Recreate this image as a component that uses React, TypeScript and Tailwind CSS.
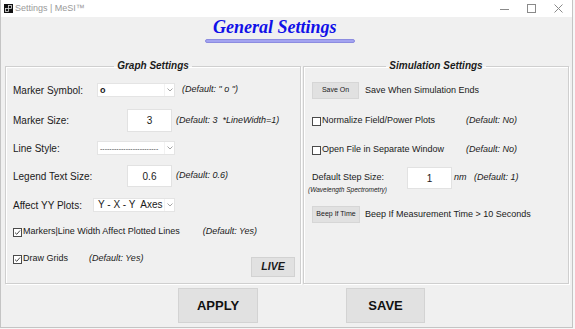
import React from "react";

function Chevron() {
  return (
    <svg width="6" height="4" viewBox="0 0 6 4" className="text-[#9a9a9a]">
      <path d="M0.5 0.5 L3 3 L5.5 0.5" fill="none" stroke="currentColor" strokeWidth="0.9" />
    </svg>
  );
}

function Select({ className, children }: { className: string; children: React.ReactNode }) {
  return (
    <div className={`flex items-center h-[14px] bg-white border border-[#e4e4e4] ${className}`}>
      <div className="flex-1 pl-[2px] flex items-center overflow-hidden whitespace-nowrap">{children}</div>
      <div className="w-[10px] h-full flex items-center justify-center border-l border-[#f2f2f2]">
        <Chevron />
      </div>
    </div>
  );
}

function Field({ value, className }: { value: string; className: string }) {
  return (
    <div className={`bg-white border border-[#e2e2e2] flex items-center justify-center text-[10px] ${className}`}>
      {value}
    </div>
  );
}

function Check({ checked }: { checked?: boolean }) {
  return (
    <span className="w-[9px] h-[9px] border border-[#4a4a4a] bg-white flex items-center justify-center shrink-0">
      {checked && (
        <svg width="7" height="7" viewBox="0 0 7 7">
          <path d="M1 3.6 L2.8 5.3 L6 1.5" fill="none" stroke="#333" strokeWidth="0.9" />
        </svg>
      )}
    </span>
  );
}

function SmallButton({ label, className }: { label: string; className: string }) {
  return (
    <div className={`h-[17px] bg-[#e1e1e1] border border-[#d6d6d6] flex items-center justify-center text-[7px] ${className}`}>
      {label}
    </div>
  );
}

export default function App() {
  return (
    <div className="w-[575px] h-[329px] bg-[#f7f7f7] overflow-hidden font-['Liberation_Sans',Arial,sans-serif] text-[#1a1a1a]">
      <div className="w-[573px] h-[328px] bg-[#f0f0f0] border-x border-b border-[#c4c4c4] flex flex-col">
        {/* Title bar */}
        <div className="h-[17px] bg-white flex items-center pl-[3px] pr-[9px]">
          <svg width="9" height="9" viewBox="0 0 9 9">
            <rect width="9" height="9" fill="#111" />
            <rect x="4.5" y="1.5" width="3" height="3" fill="none" stroke="#ddd" strokeWidth="0.8" />
            <rect x="1.5" y="4.5" width="3" height="3" fill="none" stroke="#ddd" strokeWidth="0.8" />
          </svg>
          <span className="ml-[2px] text-[9px] text-[#9a9a9a]">Settings | MeSI™</span>
          <div className="ml-auto flex items-center gap-[18px] text-[#8a8a8a]">
            <svg width="9" height="9" viewBox="0 0 9 9">
              <path d="M0 5.5 H9" stroke="currentColor" strokeWidth="1" />
            </svg>
            <svg width="9" height="9" viewBox="0 0 9 9">
              <rect x="0.5" y="0.5" width="8" height="8" fill="none" stroke="currentColor" strokeWidth="1" />
            </svg>
            <svg width="9" height="9" viewBox="0 0 9 9">
              <path d="M0.5 0.5 L8.5 8.5 M8.5 0.5 L0.5 8.5" stroke="currentColor" strokeWidth="1" />
            </svg>
          </div>
        </div>

        {/* Heading */}
        <div className="flex flex-col items-start pl-[204px]">
          <h1 className="ml-[8px] font-['Liberation_Serif','Times_New_Roman',serif] font-bold italic text-[18px] leading-[20px] text-[#1010e8]">
            General Settings
          </h1>
          <div className="mt-[2px] w-[150px] h-[4px] rounded-[2px] bg-[#a3a3f0] border border-[#8c8ce0]" />
        </div>

        {/* Panels */}
        <div className="mt-[16px] flex pl-[4px] gap-[2px]">
          <fieldset className="w-[296px] h-[225px] border border-[#cfcfcf] shadow-[inset_1px_1px_0_#fff,1px_1px_0_#fff] px-[7px]">
            <legend className="mx-auto px-[3px] text-[10px] leading-[14px] font-bold italic">Graph Settings</legend>
            <div className="flex flex-col text-[10px]">
              <div className="mt-[7px] h-[20px] flex items-center">
                <span className="w-[84px]">Marker Symbol:</span>
                <Select className="w-[78px]">
                  <span className="font-bold text-[9px] leading-none">o</span>
                </Select>
                <span className="ml-[7px] italic text-[9px]">(Default: " o ")</span>
              </div>
              <div className="mt-[9px] h-[23px] flex items-center">
                <span className="w-[114px]">Marker Size:</span>
                <Field value="3" className="w-[45px] h-[23px]" />
                <span className="ml-[4px] italic text-[9px] whitespace-pre">(Default: 3  *LineWidth=1)</span>
              </div>
              <div className="mt-[6px] h-[20px] flex items-center">
                <span className="w-[84px]">Line Style:</span>
                <Select className="w-[78px]">
                  <span className="text-[7px] leading-none text-[#444]">-------------------------</span>
                </Select>
              </div>
              <div className="mt-[7px] h-[22px] flex items-center">
                <span className="w-[114px]">Legend Text Size:</span>
                <Field value="0.6" className="w-[45px] h-[22px]" />
                <span className="ml-[4px] italic text-[9px]">(Default: 0.6)</span>
              </div>
              <div className="mt-[8px] h-[20px] flex items-center">
                <span className="w-[80px]">Affect YY Plots:</span>
                <Select className="w-[82px]">
                  <span className="pl-[2px] text-[10px] leading-none whitespace-pre">Y - X - Y  Axes</span>
                </Select>
              </div>
              <div className="mt-[7px] h-[20px] flex items-center text-[9px]">
                <Check checked />
                <span className="ml-px">Markers|Line Width Affect Plotted Lines</span>
                <span className="ml-[23px] italic">(Default: Yes)</span>
              </div>
              <div className="mt-[7px] flex items-start text-[9px]">
                <div className="h-[20px] flex items-center">
                  <Check checked />
                  <span className="ml-px">Draw Grids</span>
                  <span className="ml-[21px] italic">(Default: Yes)</span>
                </div>
                <div className="ml-auto -mr-[2px] mt-[8px] w-[44px] h-[20px] bg-[#e1e1e1] border border-[#d2d2d2] flex items-center justify-center font-bold italic text-[10.5px]">
                  LIVE
                </div>
              </div>
            </div>
          </fieldset>

          <fieldset className="w-[266px] h-[225px] border border-[#cfcfcf] shadow-[inset_1px_1px_0_#fff,1px_1px_0_#fff] px-[8px]">
            <legend className="mx-auto px-[3px] text-[10px] leading-[14px] font-bold italic">Simulation Settings</legend>
            <div className="flex flex-col text-[9px]">
              <div className="mt-[9px] flex items-center">
                <SmallButton label="Save On" className="w-[47px]" />
                <span className="ml-[6px]">Save When Simulation Ends</span>
              </div>
              <div className="mt-[12px] h-[20px] flex items-center">
                <Check />
                <span className="ml-px w-[144px]">Normalize Field/Power Plots</span>
                <span className="italic">(Default: No)</span>
              </div>
              <div className="mt-[9px] h-[20px] flex items-center">
                <Check />
                <span className="ml-px w-[144px]">Open File in Separate Window</span>
                <span className="italic">(Default: No)</span>
              </div>
              <div className="mt-[7px] flex items-start">
                <div className="w-[95px] flex flex-col">
                  <span className="mt-px leading-[18px]">Default Step Size:</span>
                  <span className="-ml-[4px] leading-[8px] text-[6.5px] italic">(Wavelength Spectrometry)</span>
                </div>
                <Field value="1" className="w-[45px] h-[22px]" />
                <span className="ml-[2px] h-[22px] flex items-center italic whitespace-pre">nm   (Default: 1)</span>
              </div>
              <div className="mt-[12px] flex items-center">
                <SmallButton label="Beep If Time" className="w-[48px]" />
                <span className="ml-[5px]">Beep If Measurement Time &gt; 10 Seconds</span>
              </div>
            </div>
          </fieldset>
        </div>

        {/* Bottom buttons */}
        <div className="mt-[4px] flex pl-[177px]">
          <button className="w-[80px] h-[35px] bg-[#e1e1e1] border border-[#d3d3d3] font-bold text-[13px] text-[#111]">
            APPLY
          </button>
          <button className="ml-[88px] w-[79px] h-[35px] bg-[#e1e1e1] border border-[#d3d3d3] font-bold text-[13px] text-[#111]">
            SAVE
          </button>
        </div>
      </div>
    </div>
  );
}
